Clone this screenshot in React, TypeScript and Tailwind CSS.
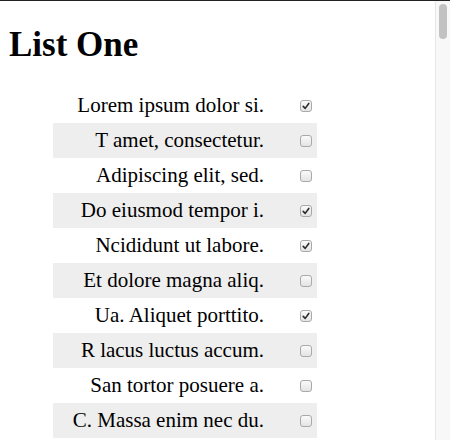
const items = [
  { text: "Lorem ipsum dolor si.", done: true },
  { text: "T amet, consectetur.", done: false },
  { text: "Adipiscing elit, sed.", done: false },
  { text: "Do eiusmod tempor i.", done: true },
  { text: "Ncididunt ut labore.", done: true },
  { text: "Et dolore magna aliq.", done: false },
  { text: "Ua. Aliquet porttito.", done: true },
  { text: "R lacus luctus accum.", done: false },
  { text: "San tortor posuere a.", done: false },
  { text: "C. Massa enim nec du.", done: false },
];

function Box({ checked }: { checked: boolean }) {
  return (
    <span className="flex h-[12px] w-[12px] items-center justify-center rounded-[3px] border border-[#a9a9a9] bg-gradient-to-b from-[#fafafa] to-[#e4e4e4]">
      {checked && (
        <svg viewBox="0 0 10 10" className="h-[8px] w-[8px]">
          <path
            d="M1.5 5.5 L4 8 L8.5 1.8"
            fill="none"
            stroke="#2b2b2b"
            strokeWidth="2"
            strokeLinecap="round"
            strokeLinejoin="round"
          />
        </svg>
      )}
    </span>
  );
}

export default function App() {
  return (
    <div className="flex h-[440px] w-[450px] border-t border-[#222] bg-white font-['Liberation_Serif',serif] text-black">
      <div className="flex-1 pl-[9px] pt-[26px]">
        <h1 className="text-[35px] font-bold leading-[35px]">List One</h1>
        <ul className="ml-[44px] mt-[26px] w-[264px]">
          {items.map((item, i) => (
            <li
              key={item.text}
              className={`flex h-[35px] items-center justify-end ${
                i % 2 === 1 ? "bg-[#eeeeee]" : ""
              }`}
            >
              <span className="text-[21px] leading-none">{item.text}</span>
              <span className="ml-[36px] mr-[5px]">
                <Box checked={item.done} />
              </span>
            </li>
          ))}
        </ul>
      </div>
      <div className="w-[15px] border-l border-[#e6e6e6] bg-[#f8f8f8]">
        <div className="ml-[3px] mt-[3px] h-[35px] w-[8px] rounded-full bg-[#c2c2c2]" />
      </div>
    </div>
  );
}
